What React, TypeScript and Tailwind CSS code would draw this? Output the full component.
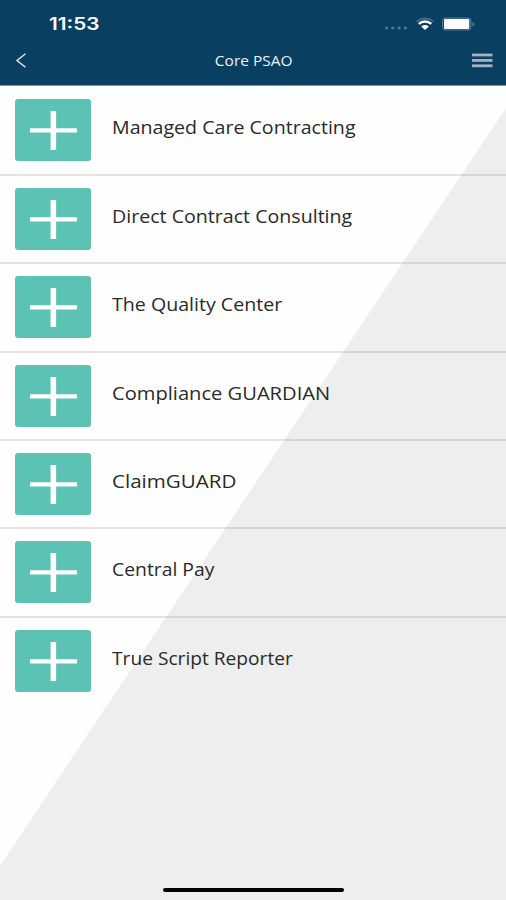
interface Service {
  label: string;
  textClass: string;
}

const services: Service[] = [
  { label: "Managed Care Contracting", textClass: "scale-x-[1.12]" },
  { label: "Direct Contract Consulting", textClass: "scale-x-[1.12]" },
  { label: "The Quality Center", textClass: "scale-x-[1.12]" },
  { label: "Compliance GUARDIAN", textClass: "scale-x-[1.15]" },
  { label: "ClaimGUARD", textClass: "scale-x-[1.175]" },
  { label: "Central Pay", textClass: "scale-x-[1.105]" },
  { label: "True Script Reporter", textClass: "scale-x-[1.095]" },
];

function StatusBar() {
  return (
    <div className="flex h-12 items-center justify-between pl-[49px] pr-[31px]">
      <span className="mt-px origin-left scale-x-[1.22] font-['Inter',sans-serif] text-[17px] leading-none font-semibold text-white">
        11:53
      </span>
      <div className="flex items-center">
        <svg width="24" height="4" viewBox="0 0 24 4" className="mt-2" fill="#4d7792">
          <circle cx="2.5" cy="2" r="1.6" />
          <circle cx="8.8" cy="2" r="1.6" />
          <circle cx="15.1" cy="2" r="1.6" />
          <circle cx="21.4" cy="2" r="1.6" />
        </svg>
        <svg width="20" height="14" viewBox="0 0 20 14" className="ml-[7px]" fill="none">
          <path d="M1.5 4.6C6 .4 14 .4 18.5 4.6" stroke="#477590" strokeWidth="1.4" />
          <path d="M3.8 6.9C7.2 3.7 12.8 3.7 16.2 6.9" stroke="#fff" strokeWidth="2.6" />
          <path d="M6.2 9.4C8.2 7.4 11.8 7.4 13.8 9.4L10 13Z" fill="#fff" />
        </svg>
        <svg width="33" height="14" viewBox="0 0 33 14" className="ml-[7px]">
          <rect x="0.6" y="1.1" width="28.3" height="11.8" rx="2.5" fill="none" stroke="#5f87a0" />
          <rect x="2" y="2" width="25.3" height="10" rx="1.2" fill="#fff" />
          <path d="M30.5 5v4.4c2.4-.8 2.4-3.6 0-4.4Z" fill="#5f87a0" />
        </svg>
      </div>
    </div>
  );
}

function NavBar() {
  return (
    <div className="grid h-[25px] grid-cols-3 items-center px-[13px]">
      <svg width="16" height="17" viewBox="0 0 16 17" fill="none" className="justify-self-start">
        <path d="M12.5 1.8 4 8.5l8.5 6.8" stroke="#e3e8f3" strokeWidth="1.4" />
      </svg>
      <h1 className="ml-px justify-self-center scale-x-[1.03] whitespace-nowrap font-['Open_Sans',sans-serif] text-[15px] leading-none text-[#eef1f8]">
        Core PSAO
      </h1>
      <svg width="21" height="15" viewBox="0 0 21 15" className="justify-self-end" fill="#a5b0c4">
        <rect y="0.6" width="20.5" height="2.8" />
        <rect y="6" width="20.5" height="2.8" />
        <rect y="11.4" width="20.5" height="2.8" />
      </svg>
    </div>
  );
}

function ServiceRow({ service, last }: { service: Service; last: boolean }) {
  return (
    <li
      className={`flex h-[88.4px] items-start pt-[12px] pl-[15.3px] ${
        last ? "" : "border-b-2 border-black/10"
      }`}
    >
      <button
        type="button"
        aria-label={service.label}
        className="h-[62px] w-[75.7px] shrink-0 rounded-[3px] bg-[#5cc2b4]"
      >
        <svg viewBox="0 0 76 62" className="size-full" fill="#fff">
          <rect x="15" y="29.2" width="47.3" height="4.2" rx="0.5" />
          <rect x="35.7" y="12" width="5.6" height="39" rx="0.5" />
        </svg>
      </button>
      <span
        className={`mt-[16px] ml-[21px] origin-left whitespace-nowrap font-['Open_Sans',sans-serif] text-[17.5px] leading-6 text-[#2a2a2a] ${service.textClass}`}
      >
        {service.label}
      </span>
    </li>
  );
}

export default function App() {
  return (
    <div className="flex h-[900px] w-[506px] flex-col overflow-hidden">
      <header className="h-[86px] shrink-0 border-b border-[#8494a6] bg-[#094062]">
        <StatusBar />
        <NavBar />
      </header>
      <main className="relative flex flex-1 flex-col justify-between bg-[#fefefe]">
        {/* diagonal backdrop */}
        <svg viewBox="0 0 506 814" className="absolute inset-0 size-full" aria-hidden="true">
          <path d="M506 22V814H0V780Z" fill="#eeeeee" />
        </svg>
        <ul className="relative pt-[1.4px]">
          {services.map((service, i) => (
            <ServiceRow key={service.label} service={service} last={i === services.length - 1} />
          ))}
        </ul>
        <div className="relative mb-2 h-1 w-[181px] self-center rounded-full bg-black" />
      </main>
    </div>
  );
}
